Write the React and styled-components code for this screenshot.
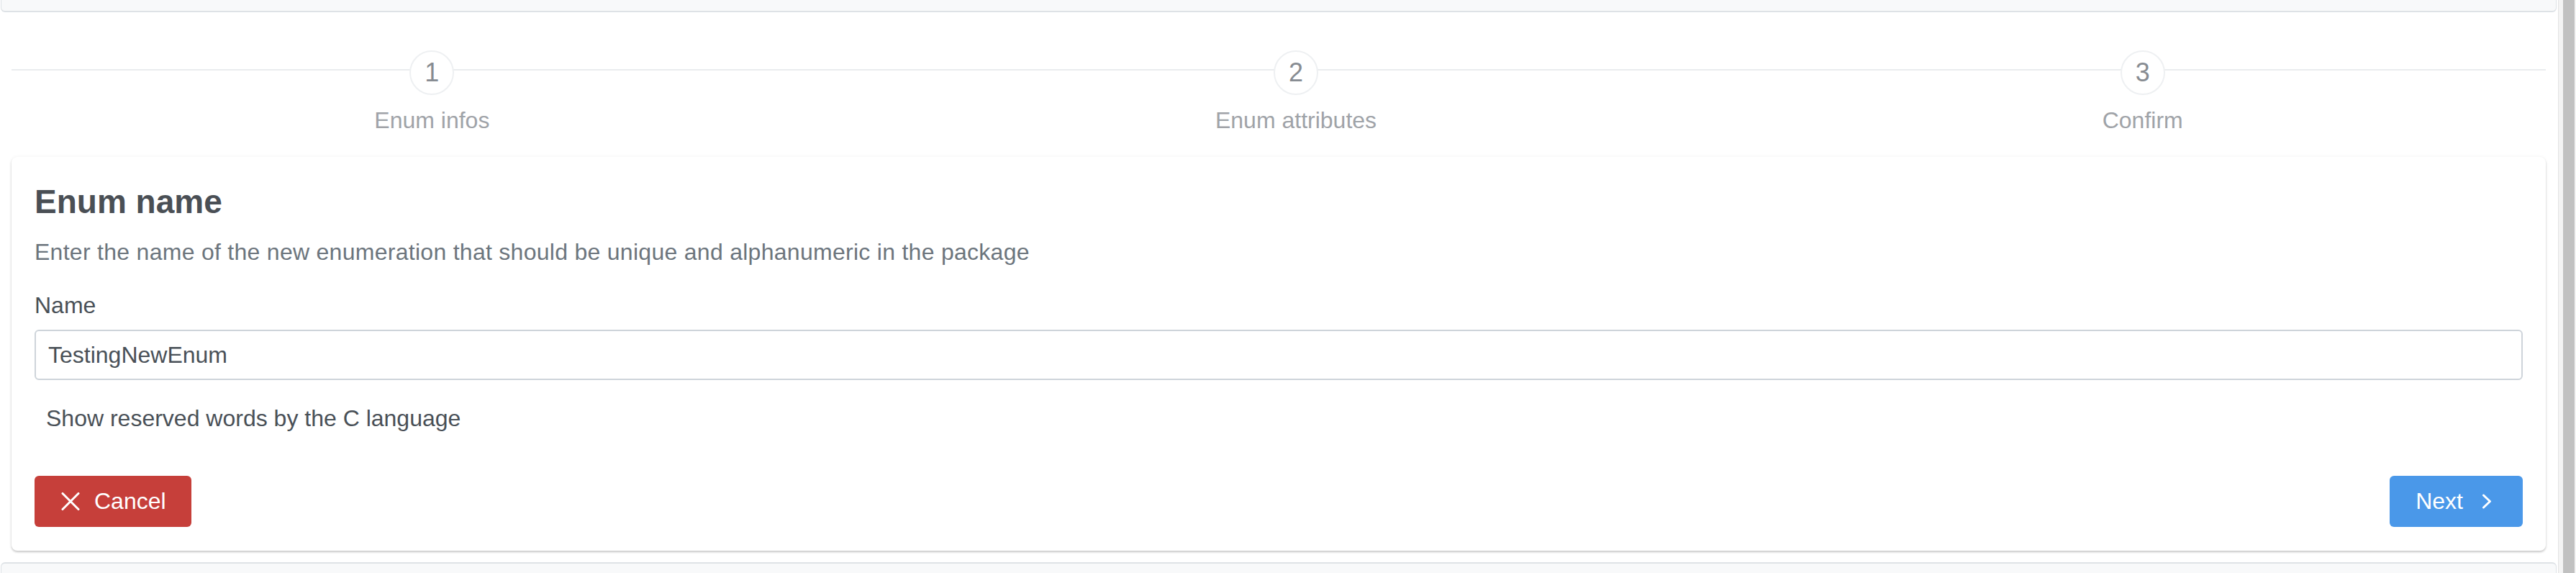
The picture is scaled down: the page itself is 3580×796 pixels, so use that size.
import React from 'react';
import styled, { createGlobalStyle } from 'styled-components';

const GlobalStyle = createGlobalStyle`
  html, body {
    margin: 0;
    padding: 0;
    background: #fff;
  }
  body {
    font-family: "Liberation Sans", Arial, sans-serif;
    overflow: hidden;
  }
  * {
    box-sizing: border-box;
  }
`;

const Window = styled.div`
  display: flex;
  width: 3580px;
  height: 796px;
  overflow: hidden;
`;

const Page = styled.main`
  flex: 1;
  min-width: 0;
  display: flex;
  flex-direction: column;
`;

const ScrollTrack = styled.div`
  width: 25px;
  flex-shrink: 0;
  padding: 0 2px 0 6px;
  background: #f4f4f4;
  border-left: 1px solid #e4e4e4;
`;

const ScrollThumb = styled.div`
  height: 100%;
  background: #c1c1c1;
`;

const EdgePanel = styled.div`
  flex-shrink: 0;
  margin: 0 2px 0 1px;
  background: #f8f9fa;
  border: 1px solid #dee2e6;
  height: ${({ $height }) => $height}px;
  ${({ $bottom }) =>
    $bottom
      ? 'border-bottom: none; border-top-width: 2px; border-radius: 6px 6px 0 0; margin-top: 16px;'
      : 'border-top: none; border-bottom-width: 2px; border-radius: 0 0 6px 6px;'}
`;

const Stepper = styled.ol`
  position: relative;
  display: flex;
  justify-content: space-around;
  margin: 53px 17px 0 16px;
  padding: 0;
  list-style: none;

  &::before {
    content: '';
    position: absolute;
    top: 26px;
    left: 0;
    right: 0;
    height: 2px;
    background: #eaecee;
  }
`;

const Step = styled.li`
  position: relative;
  display: flex;
  flex-direction: column;
  align-items: center;
`;

const StepNumber = styled.span`
  display: flex;
  align-items: center;
  justify-content: center;
  width: 62px;
  height: 62px;
  border: 2px solid #eef0f2;
  border-radius: 50%;
  background: #fff;
  font-size: 36px;
  color: #878c92;
`;

const StepLabel = styled.span`
  margin-top: 11px;
  font-size: 32px;
  line-height: 48px;
  color: #9fa3a8;
`;

const Card = styled.section`
  margin: 27px 17px 0 16px;
  padding: 35px 32px 33px;
  background: #fff;
  border-radius: 8px;
  box-shadow: 0 2px 3px rgba(0, 0, 0, 0.2), 0 0 5px rgba(0, 0, 0, 0.05);
`;

const Title = styled.h4`
  margin: 0;
  font-size: 46px;
  line-height: 1.2;
  font-weight: 700;
  color: #4a4f55;
`;

const Text = styled.p`
  margin: ${({ $margin }) => $margin || 0};
  font-size: 32px;
  line-height: 48px;
  letter-spacing: ${({ $muted }) => ($muted ? '0.28px' : '0')};
  color: ${({ $muted }) => ($muted ? '#6c757d' : '#495057')};
`;

const Label = styled.label`
  display: block;
  margin-top: 26px;
  font-size: 32px;
  line-height: 48px;
  color: #495057;
`;

const Input = styled.input`
  display: block;
  width: 100%;
  height: 70px;
  margin-top: 10px;
  padding: 0 17px;
  border: 2px solid #ced4da;
  border-radius: 6px;
  font-family: inherit;
  font-size: 32px;
  color: #495057;
  background: #fff;
  outline: none;
`;

const Actions = styled.div`
  display: flex;
  justify-content: space-between;
  margin-top: 56px;
`;

const Button = styled.button`
  display: inline-flex;
  align-items: center;
  gap: ${({ $gap }) => $gap}px;
  height: 71px;
  padding: ${({ $pad }) => $pad};
  border: none;
  border-radius: 6px;
  background: ${({ $color }) => $color};
  font-family: inherit;
  font-size: 32px;
  color: #fff;
  cursor: pointer;
`;

const steps = ['Enum infos', 'Enum attributes', 'Confirm'];

const CrossIcon = () => (
  <svg width="26" height="25" viewBox="0 0 26 25" fill="none">
    <path d="M2 1.5 L24 23.5 M24 1.5 L2 23.5" stroke="#fff" strokeWidth="3" strokeLinecap="round" />
  </svg>
);

const ChevronIcon = () => (
  <svg width="14" height="21" viewBox="0 0 14 21" fill="none">
    <path d="M2.5 2 L11.5 10.5 L2.5 19" stroke="#fff" strokeWidth="3" strokeLinecap="round" strokeLinejoin="round" />
  </svg>
);

const App = () => (
  <>
    <GlobalStyle />
    <Window>
      <Page>
        <EdgePanel $height={17} />
        <Stepper>
          {steps.map((label, i) => (
            <Step key={label}>
              <StepNumber>{i + 1}</StepNumber>
              <StepLabel>{label}</StepLabel>
            </Step>
          ))}
        </Stepper>
        <Card>
          <Title>Enum name</Title>
          <Text $muted $margin="18px 0 0">
            Enter the name of the new enumeration that should be unique and alphanumeric in the package
          </Text>
          <Label htmlFor="enum-name">Name</Label>
          <Input id="enum-name" defaultValue="TestingNewEnum" />
          <Text $margin="29px 0 0 16px">Show reserved words by the C language</Text>
          <Actions>
            <Button $color="#c63f3a" $pad="0 35px 0 37px" $gap={20}>
              <CrossIcon />
              Cancel
            </Button>
            <Button $color="#4a98e9" $pad="0 43px 0 36px" $gap={26}>
              Next
              <ChevronIcon />
            </Button>
          </Actions>
        </Card>
        <EdgePanel $bottom $height={40} />
      </Page>
      <ScrollTrack>
        <ScrollThumb />
      </ScrollTrack>
    </Window>
  </>
);

export default App;
